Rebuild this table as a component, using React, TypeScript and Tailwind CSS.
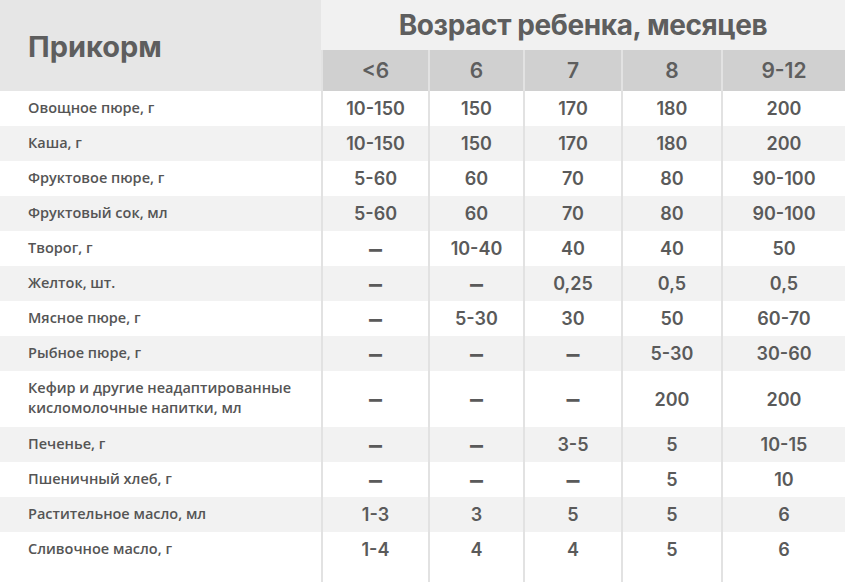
const ages = ["<6", "6", "7", "8", "9-12"];

const rows: { name: string[]; values: string[] }[] = [
  { name: ["Овощное пюре, г"], values: ["10-150", "150", "170", "180", "200"] },
  { name: ["Каша, г"], values: ["10-150", "150", "170", "180", "200"] },
  { name: ["Фруктовое пюре, г"], values: ["5-60", "60", "70", "80", "90-100"] },
  { name: ["Фруктовый сок, мл"], values: ["5-60", "60", "70", "80", "90-100"] },
  { name: ["Творог, г"], values: ["–", "10-40", "40", "40", "50"] },
  { name: ["Желток, шт."], values: ["–", "–", "0,25", "0,5", "0,5"] },
  { name: ["Мясное пюре, г"], values: ["–", "5-30", "30", "50", "60-70"] },
  { name: ["Рыбное пюре, г"], values: ["–", "–", "–", "5-30", "30-60"] },
  {
    name: ["Кефир и другие неадаптированные", "кисломолочные напитки, мл"],
    values: ["–", "–", "–", "200", "200"],
  },
  { name: ["Печенье, г"], values: ["–", "–", "3-5", "5", "10-15"] },
  { name: ["Пшеничный хлеб, г"], values: ["–", "–", "–", "5", "10"] },
  { name: ["Растительное масло, мл"], values: ["1-3", "3", "5", "5", "6"] },
  { name: ["Сливочное масло, г"], values: ["1-4", "4", "4", "5", "6"] },
];

const grid = "grid grid-cols-[321px_107px_95px_98px_100px_1fr]";

export default function App() {
  return (
    <div className="w-[845px] h-[582px] overflow-hidden bg-white text-[#5a5a5a] font-['Inter',sans-serif]">
      <div className={grid}>
        <div className="row-span-2 h-[91px] bg-[#e6e6e6] flex items-center pl-[28px] pt-[2px] text-[29px] font-bold text-[#5e5e5e]">
          Прикорм
        </div>
        <div className="col-span-5 h-[50px] bg-[#f1f1f1] flex items-center justify-center text-[28px] font-bold tracking-[-0.4px] text-[#5e5e5e]">
          Возраст ребенка, месяцев
        </div>
        {ages.map((a) => (
          <div
            key={a}
            className="h-[41px] bg-[#d0d0d0] border-l-2 border-[#e2e2e2] flex items-center justify-center text-[21px] font-semibold text-[#5e5e5e]"
          >
            {a}
          </div>
        ))}
      </div>

      {rows.map((r, i) => (
        <div
          key={r.name[0]}
          className={`${grid} ${r.name.length > 1 ? "h-[56px]" : "h-[35px]"} ${
            i % 2 === 1 ? "bg-[#f2f2f2]" : "bg-white"
          }`}
        >
          <div className="flex flex-col justify-center pl-[28px] pb-[2px] font-['Open_Sans',sans-serif] text-[14.5px] font-semibold leading-[20px] text-[#555]">
            {r.name.map((n) => (
              <span key={n}>{n}</span>
            ))}
          </div>
          {r.values.map((v, j) => (
            <div
              key={j}
              className="border-l-2 border-[#e2e2e2] flex items-center justify-center text-[18px] font-semibold"
            >
              {v === "–" ? (
                <span className="text-[26px] leading-none">–</span>
              ) : (
                v
              )}
            </div>
          ))}
        </div>
      ))}

      <div className={`${grid} h-[20px]`}>
        <div />
        {ages.map((a) => (
          <div key={a} className="border-l-2 border-[#e2e2e2]" />
        ))}
      </div>
    </div>
  );
}
